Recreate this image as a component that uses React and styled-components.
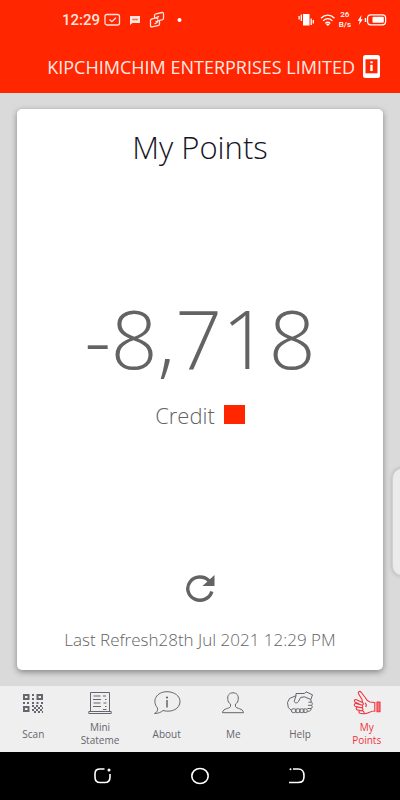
import React from 'react';
import styled, { createGlobalStyle } from 'styled-components';

const tabs = [
  { id: 'scan', label: 'Scan', Icon: QrIcon },
  { id: 'statement', label: 'Mini Stateme', Icon: StatementIcon },
  { id: 'about', label: 'About', Icon: AboutIcon },
  { id: 'me', label: 'Me', Icon: PersonIcon },
  { id: 'help', label: 'Help', Icon: HandshakeIcon },
  { id: 'points', label: 'My Points', Icon: ThumbIcon },
];

const App = () => {
  const [active, setActive] = React.useState('points');

  return (
    <>
      <GlobalStyle />
      <Screen>
        <Header>
          <StatusBar>
            <StatusGroup>
              <Clock>12:29</Clock>
              <NoticeIcons />
            </StatusGroup>
            <StatusGroup>
              <SignalIcons />
              <Speed>
                <span>26</span>
                <span>B/s</span>
              </Speed>
              <BatteryIcon />
            </StatusGroup>
          </StatusBar>
          <AppBar>
            <Company>KIPCHIMCHIM ENTERPRISES LIMITED</Company>
            <IconButton type="button" aria-label="Device info">
              <DeviceInfoIcon />
            </IconButton>
          </AppBar>
        </Header>
        <Main>
          <Card>
            <Title>My Points</Title>
            <Balance>
              <Amount>-8,718</Amount>
              <Legend>
                Credit
                <Swatch />
              </Legend>
            </Balance>
            <RefreshButton type="button" aria-label="Refresh">
              <RefreshIcon />
            </RefreshButton>
            <Refreshed>Last Refresh28th Jul 2021 12:29 PM</Refreshed>
          </Card>
          <EdgeHandle />
        </Main>
        <TabBar>
          {tabs.map(({ id, label, Icon }) => (
            <Tab key={id} type="button" $active={id === active} onClick={() => setActive(id)}>
              <Icon />
              <TabLabel>
                <span>{label}</span>
              </TabLabel>
            </Tab>
          ))}
        </TabBar>
        <SystemNav>
          <IconButton type="button" aria-label="Recent apps">
            <svg width="20" height="18" viewBox="0 0 20 18" fill="none" stroke="#fff" strokeWidth="1.6">
              <path d="M11.5 2H7C3.5 2 2 3.5 2 7v3c0 3.600 1.500 5.500 5 5.500h5c3.500 0 5-1.900 5-5.500V7" />
              <circle cx="16" cy="3" r="1.500" fill="#fff" stroke="none" />
            </svg>
          </IconButton>
          <IconButton type="button" aria-label="Home">
            <svg width="20" height="18" viewBox="0 0 20 18" fill="none" stroke="#fff" strokeWidth="1.6">
              <ellipse cx="10" cy="9" rx="8.200" ry="7.500" />
            </svg>
          </IconButton>
          <IconButton type="button" aria-label="Back">
            <svg width="20" height="18" viewBox="0 0 20 18" fill="none" stroke="#fff" strokeWidth="1.6">
              <path d="M6 2h5c4.500 0 6 2 6 7s-1.500 6.500-6 6.500H2" />
              <circle cx="3.500" cy="2.200" r="1" fill="#fff" stroke="none" />
            </svg>
          </IconButton>
        </SystemNav>
      </Screen>
    </>
  );
};

export default App;

function NoticeIcons() {
  return (
    <svg width="80" height="18" viewBox="0 0 80 18" fill="none" stroke="#ffe4df" strokeWidth="1.3">
      <rect x="2" y="3.500" width="14.500" height="10.500" rx="2" />
      <path d="M6.500 8.500l2.400 2.200 4-4" />
      <path d="M27 5h10v7H29.500L27 14z" fill="#ffe4df" stroke="none" />
      <path d="M29.500 8.500h5" stroke="#ff2600" strokeDasharray="1.200 0.700" />
      <path
        d="M51.500 8V4.500c0-1 .500-1.500 1.500-1.700l6-1.300c1-.200 1.500.200 1.500 1.200v4.500c0 1-.500 1.500-1.500 1.700l-5 .900M56.500 9v4c0 1-.500 1.500-1.500 1.700l-6 1.200c-1 .200-1.500-.200-1.500-1.200V9.500c0-1 .500-1.500 1.500-1.700l4.500-.900M56 5.300l-2.800 1.400 2 1.500M51.500 13l3-1.700-2-1.300"
        strokeLinejoin="round"
      />
      <circle cx="76.500" cy="9" r="2" fill="#fff" stroke="none" />
    </svg>
  );
}

function SignalIcons() {
  return (
    <svg width="38" height="16" viewBox="0 0 38 16" fill="none" stroke="#fff" strokeWidth="1.3">
      <path d="M5 2h6.500v11.500H5z" fill="#fff" stroke="none" />
      <path d="M3.300 2.500v6.500M1.100 4v3.500M13.200 6.500v6.500M15.300 8v3.500" />
      <path d="M23 6.200c4-4 9.500-4 13.500 0M25.200 8.900c3-3 6.300-3 9.200 0M27.300 11.400c1.600-1.600 3.200-1.600 5 0" />
      <path d="M28 12.200l1.800 1.900 1.900-1.900c-1.200-1-2.500-1-3.700 0z" fill="#fff" stroke="none" />
    </svg>
  );
}

function BatteryIcon() {
  return (
    <svg width="30" height="14" viewBox="0 0 30 14" fill="none" stroke="#fff" strokeWidth="1.2">
      <path d="M4.500 2L.700 7.800h2L1.800 12l4-5.800h-2z" fill="#fff" stroke="none" />
      <path d="M8.500 5v4" strokeWidth="1.5" />
      <rect x="10.600" y="1.800" width="18" height="10" rx="3" />
      <rect x="15.500" y="3.800" width="11.300" height="6" rx="1" fill="#fff" stroke="none" />
    </svg>
  );
}

function DeviceInfoIcon() {
  return (
    <svg width="17" height="23" viewBox="0 0 17 23">
      <rect width="17" height="23" rx="2.500" fill="#fff" />
      <path d="M2.500 4.300h12v14h-12z" fill="#ff2600" />
      <path d="M7.300 6.300h2.400v2H7.300zM7.300 9.700h2.400v6.200H7.300z" fill="#fff" />
    </svg>
  );
}

function RefreshIcon() {
  return (
    <svg width="30" height="28" viewBox="0 0 30 28" fill="none">
      <path d="M24 6.800A12.200 11.600 0 1 0 26.800 17.500" stroke="#636363" strokeWidth="3.400" />
      <path d="M29.500 1v11H17.500z" fill="#636363" />
    </svg>
  );
}

function QrIcon() {
  return (
    <svg width="28" height="26" viewBox="0 0 28 26" fill="none" stroke="currentColor">
      <path d="M5 5h4.500v4H5zM18.500 5H23v4h-4.500zM5 17h4.500v4H5z" strokeWidth="2" />
      <path d="M13 5h2M13 9h2M4 13h2M8 13h2M13 13h2M17.500 13h2M22 13h2" strokeWidth="1.8" />
      <path
        d="M13 16h2M17 16h2M21 16h2M15 18h2M19 18h2M23 18h1M13 20h2M17 20h2M21 20h2M15 22h2M19 22h2M23 22h1"
        strokeWidth="2"
      />
    </svg>
  );
}

function StatementIcon() {
  return (
    <svg width="28" height="26" viewBox="0 0 28 26" fill="none" stroke="currentColor" strokeWidth="1">
      <path d="M4.500 21.500v-19h19v19M2.800 21.500v2h22.400v-2h-5.500" />
      <path d="M2.800 21.500h17" />
      <path d="M7.500 6h7M7 9.500h8M7.500 13h7M7 16.500h8M17 6h3M19 9.500h1.500M17.500 13h3M19 16.500h1.500M17 19.500h3.500" strokeWidth="1.2" />
    </svg>
  );
}

function AboutIcon() {
  return (
    <svg width="28" height="26" viewBox="0 0 28 26" fill="none" stroke="currentColor" strokeWidth="1">
      <path d="M4.500 18C-1.500 11 3.300 1.700 14 1.700c7.500 0 13 4.400 13 9.800 0 7-8 11.500-17 9-2 1.800-4.300 2.800-8.500 3 2.500-1.300 3.500-3 3-5.500z" />
      <path d="M14 10v7.500" strokeWidth="1.5" />
      <circle cx="14" cy="7.500" r="1.100" fill="currentColor" stroke="none" />
    </svg>
  );
}

function PersonIcon() {
  return (
    <svg width="28" height="26" viewBox="0 0 28 26" fill="none" stroke="currentColor" strokeWidth="1">
      <path d="M11.500 16.500v-2.500C9.800 13 9 11.500 8.800 9.500 8.200 5.300 10.300 2.800 14 2.800s5.800 2.500 5.200 6.700c-.200 2-1 3.500-2.700 4.500v2.500c1 2.500 7.500 1.500 8 6.200H3.500c.500-4.700 7-3.700 8-6.200z" />
    </svg>
  );
}

function HandshakeIcon() {
  return (
    <svg width="28" height="26" viewBox="0 0 28 26" fill="none" stroke="currentColor" strokeWidth="1" strokeLinejoin="round">
      <path d="M5.500 20.500L2.300 17.500 1.500 12.500 3.500 8.500l6.500-2.800V3.500h8.500L20 1.800l6.500 3L24.800 9.500l.5 2.500c1.200.8 1.300 2.300.3 3.300 1 1.200.8 2.700-.6 3.200.3 1.800-.8 2.700-2.500 2.700l-1 1" />
      <path d="M10 5.700L8.300 11c0 2.300 3 2.500 4.200.5l2-4 4-.7 6.300 2.700M22.500 12.200h2.800M22 15.300h3.500M21.500 18.500h3.500" />
      <path d="M7.300 18.800h1a1.900 1.900 0 0 1 0 3.800h-1a1.900 1.900 0 0 1 0-3.800zM11.300 18.800h1a1.900 1.900 0 0 1 0 3.800h-1a1.900 1.900 0 0 1 0-3.800zM15.300 18.800h1a1.900 1.900 0 0 1 0 3.800h-1a1.900 1.900 0 0 1 0-3.800zM19 18.800h.5a1.900 1.900 0 0 1 0 3.800H19a1.900 1.900 0 0 1 0-3.800z" />
    </svg>
  );
}

function ThumbIcon() {
  return (
    <svg width="28" height="26" viewBox="0 0 28 26" fill="none" stroke="currentColor" strokeWidth="1.1" strokeLinejoin="round">
      <path d="M21.500 12.500l-4.500-.500c-2.500-.500-3.500-2-4.500-4L8 2C6.500.700 4.700 2 5.500 3.700L9 9.500l.500 3" />
      <path d="M9.500 12.500L3.500 9.700C1.500 9 .500 11.200 2.300 12.300l6 2.700c2 .500 2.800-1.800 1.200-2.500zM8.500 15L2.800 13.500c-1.800-.200-2 2.200-.5 2.700l5.700 1.500c2 .300 2.300-2.300.5-2.700zM8.500 17.700l-4-.7c-1.800 0-1.700 2.500-.2 2.900l4 .900c2 .200 2.300-2.700.2-3.100zM8.800 20.700l-2-.2c-1.300.5-1 2.500.2 2.800l3 .5c2 0 1.500-2.900-1.200-3.100z" />
      <path d="M11 23.800c4.500 0 5.500-2.800 10.500-2.800M12 13c1.500 1 1.500 2.500.8 4" />
      <path d="M21.800 12v9.800" />
      <path d="M24 12h3v9.800h-3z" fill="currentColor" fillOpacity="0.6" />
    </svg>
  );
}

const GlobalStyle = createGlobalStyle`
  * {
    box-sizing: border-box;
  }
  body {
    margin: 0;
    font-family: 'Open Sans', 'Noto Sans', sans-serif;
  }
  button {
    padding: 0;
    border: 0;
    background: none;
    font: inherit;
    cursor: pointer;
  }
  svg {
    display: block;
    flex: none;
  }
`;

const Screen = styled.div`
  min-height: 100vh;
  display: flex;
  flex-direction: column;
  background: #dadada;
`;

const Header = styled.header`
  background: #ff2600;
  color: #fff;
`;

const StatusBar = styled.div`
  height: 40px;
  padding: 0 13px 0 62px;
  display: flex;
  align-items: center;
  justify-content: space-between;
`;

const StatusGroup = styled.div`
  display: flex;
  align-items: center;
  gap: 3px;
`;

const Clock = styled.span`
  font-family: Roboto, sans-serif;
  font-size: 15px;
  font-weight: 500;
  color: #ffe4df;
`;

const Speed = styled.span`
  display: flex;
  flex-direction: column;
  align-items: center;
  margin-right: 3px;
  font-family: Roboto, sans-serif;
  font-size: 8px;
  line-height: 10px;
  font-weight: 500;
`;

const AppBar = styled.div`
  height: 53px;
  padding: 0 20px;
  display: flex;
  align-items: center;
  justify-content: flex-end;
  gap: 8px;
`;

const Company = styled.h1`
  margin: 0;
  font-size: 18px;
  line-height: 24px;
  font-weight: 400;
  white-space: nowrap;
  color: #ffeae6;
`;

const IconButton = styled.button`
  display: flex;
  align-items: center;
  justify-content: center;
`;

const Main = styled.main`
  position: relative;
  flex: 1;
  display: flex;
  padding: 16px 17px;
  overflow: hidden;
`;

const Card = styled.section`
  flex: 1;
  display: flex;
  flex-direction: column;
  align-items: center;
  padding: 16px 12px;
  border-radius: 5px;
  background: #fff;
  box-shadow: 0 2px 6px rgba(0, 0, 0, 0.4);
`;

const Title = styled.h2`
  margin: 0;
  font-size: 31px;
  line-height: 44px;
  font-weight: 300;
  color: #14141e;
`;

const Balance = styled.div`
  flex: 1;
  display: flex;
  flex-direction: column;
  align-items: center;
  justify-content: center;
  padding-bottom: 22px;
`;

const Amount = styled.div`
  margin-bottom: 8px;
  font-size: 82px;
  line-height: 100px;
  font-weight: 300;
  color: #636363;
`;

const Legend = styled.div`
  display: flex;
  align-items: center;
  gap: 9px;
  font-size: 22px;
  line-height: 40px;
  font-weight: 300;
  color: #636363;
`;

const Swatch = styled.span`
  width: 21px;
  height: 19px;
  background: #ff2600;
`;

const RefreshButton = styled(IconButton)`
  margin-bottom: 24px;
`;

const Refreshed = styled.p`
  margin: 0;
  font-size: 17px;
  line-height: 28px;
  font-weight: 300;
  color: #636363;
`;

const EdgeHandle = styled.div`
  position: absolute;
  top: 375px;
  right: -12px;
  width: 20px;
  height: 108px;
  border: 1px solid #d0d0d0;
  border-radius: 10px;
  background: #ebebeb;
  box-shadow: 0 0 4px rgba(0, 0, 0, 0.2);
`;

const TabBar = styled.nav`
  height: 66px;
  display: grid;
  grid-template-columns: repeat(6, 1fr);
  background: #efefef;
`;

const Tab = styled.button`
  display: flex;
  flex-direction: column;
  align-items: center;
  padding-top: 4px;
  color: ${props => (props.$active ? '#f0323c' : '#65656d')};
`;

const TabLabel = styled.span`
  flex: 1;
  display: flex;
  align-items: center;
  justify-content: center;
  width: 40px;
  font-size: 10px;
  line-height: 13px;
`;

const SystemNav = styled.footer`
  height: 48px;
  padding: 0 54px;
  display: grid;
  grid-template-columns: repeat(3, 1fr);
  background: #000;
`;
